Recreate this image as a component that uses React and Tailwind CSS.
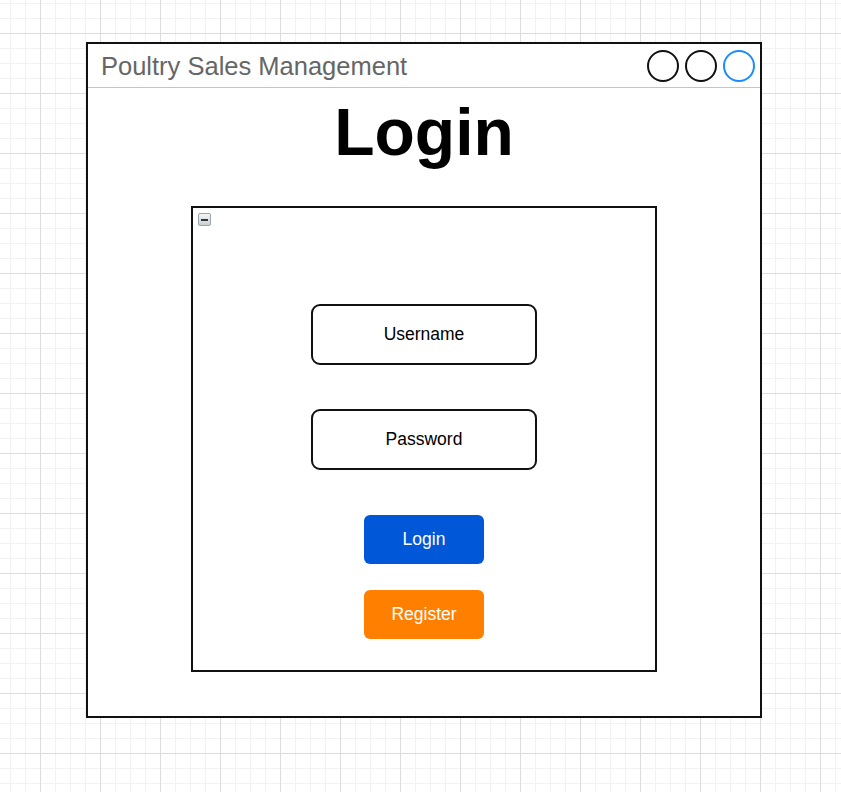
const FIELDS = ["Username", "Password"];

function WindowButtons() {
  return (
    <div className="flex items-center gap-[6px]">
      <div className="h-[32px] w-[32px] rounded-full border-2 border-[#111]"></div>
      <div className="h-[32px] w-[32px] rounded-full border-2 border-[#111]"></div>
      <div className="h-[32px] w-[32px] rounded-full border-2 border-[#1a8cff]"></div>
    </div>
  );
}

function MinimizeIcon() {
  return (
    <div className="absolute left-[5px] top-[5px] flex h-[13px] w-[13px] items-center justify-center rounded-[2px] border border-[#9aa4ae] bg-gradient-to-b from-[#f4f6f8] to-[#c9d0d6]">
      <div className="h-[2px] w-[7px] bg-[#333]"></div>
    </div>
  );
}

export default function App() {
  return (
    <div
      className="h-[792px] w-full overflow-hidden bg-white pl-[86px] pt-[42px] bg-[linear-gradient(to_right,#dddddd_1px,transparent_1px),linear-gradient(to_bottom,#dddddd_1px,transparent_1px),linear-gradient(to_right,#f2f2f2_1px,transparent_1px),linear-gradient(to_bottom,#f2f2f2_1px,transparent_1px)] bg-[size:60px_60px,60px_60px,15px_15px,15px_15px] bg-[position:40px_33px]"
      style={{ fontFamily: '"Liberation Sans", Arial, sans-serif' }}
    >
      <div className="flex h-[676px] w-[676px] flex-col border-2 border-[#111] bg-white">
        <header className="flex h-[44px] shrink-0 items-center justify-between border-b border-[#c4c4c4] pl-[13px] pr-[5px]">
          <span className="pt-[3px] text-[25.5px] leading-none text-[#666]">
            Poultry Sales Management
          </span>
          <WindowButtons />
        </header>

        <main className="flex flex-col items-center">
          <h1 className="mt-[11px] text-[66px] font-bold leading-none text-black">
            Login
          </h1>

          <section className="relative mt-[41px] flex h-[466px] w-[466px] flex-col items-center border-2 border-[#111] pt-[96px]">
            <MinimizeIcon />

            {FIELDS.map((label, i) => (
              <div
                key={label}
                className={
                  i === 0
                    ? "flex h-[61px] w-[226px] items-center justify-center rounded-[9px] border-2 border-[#111] text-[17.5px] text-black"
                    : "mt-[44px] flex h-[61px] w-[226px] items-center justify-center rounded-[9px] border-2 border-[#111] text-[17.5px] text-black"
                }
              >
                {label}
              </div>
            ))}

            <button className="mt-[45px] h-[49px] w-[120px] rounded-[6px] bg-[#0057d8] text-[17.5px] text-white">
              Login
            </button>
            <button className="mt-[26px] h-[49px] w-[120px] rounded-[6px] bg-[#ff8000] text-[17.5px] text-white">
              Register
            </button>
          </section>
        </main>
      </div>
    </div>
  );
}
